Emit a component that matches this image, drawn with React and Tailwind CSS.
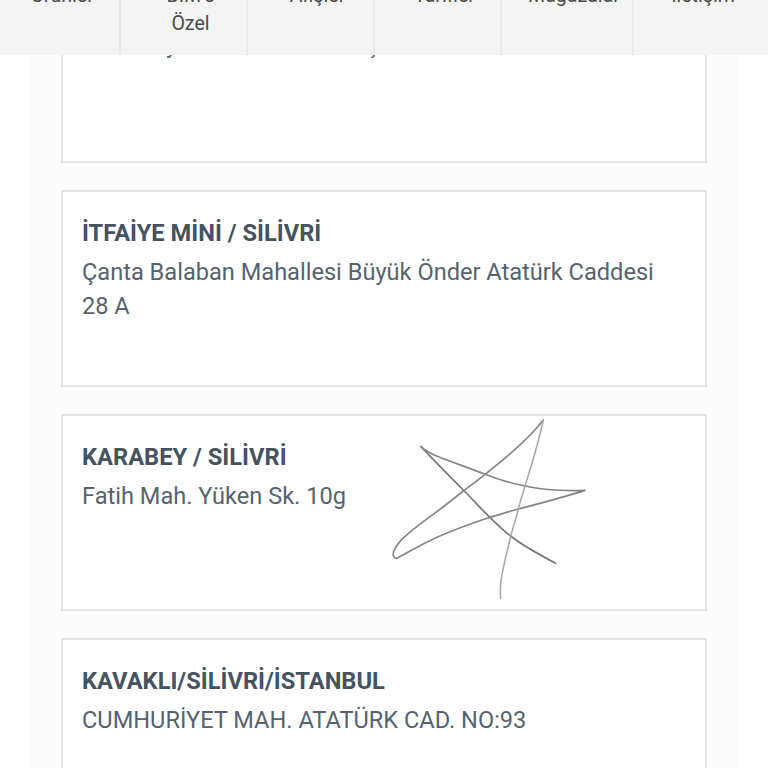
const navItems = [
  { label: 'Ürünler', width: 'w-[121px] pl-[6px]' },
  { label: "BİM'e Özel", width: 'w-[127px] pl-[14px]' },
  { label: 'Afişler', width: 'w-[127px] pl-[14px]' },
  { label: 'Tarifler', width: 'w-[127px] pl-[14px]' },
  { label: 'Mağazalar', width: 'w-[132px] pl-[14px]' },
  { label: 'İletişim', width: 'flex-1 pl-[4px]' },
]

const stores = [
  { title: 'FENERKÖY / SİLİVRİ', address: 'Fenerköy Mahallesi Kurtuluş', addressGap: 'mt-[3px]' },
  { title: 'İTFAİYE MİNİ / SİLİVRİ', address: 'Çanta Balaban Mahallesi Büyük Önder Atatürk Caddesi 28 A', addressGap: 'mt-[6px]' },
  { title: 'KARABEY / SİLİVRİ', address: 'Fatih Mah. Yüken Sk. 10g', addressGap: 'mt-[6px]', signed: true },
  { title: 'KAVAKLI/SİLİVRİ/İSTANBUL', address: 'CUMHURİYET MAH. ATATÜRK CAD. NO:93', addressGap: 'mt-[6px]' },
]

function Scribble() {
  return (
    <svg
      className="absolute left-[317px] top-[-6px] w-[220px] h-[200px]"
      viewBox="0 0 660 600"
      fill="none"
      strokeLinecap="round"
      strokeLinejoin="round"
    >
      <path
        d="M123 110C170 160 210 200 250 240C285 275 305 300 330 322C350 342 370 362 392 378C425 405 480 435 527 460"
        stroke="#777777"
        strokeWidth="5"
      />
      <path
        d="M123 110C135 122 150 130 170 138C220 158 270 175 315 193C355 209 395 220 435 228C490 240 560 243 615 241C550 262 480 280 415 297C385 305 360 313 330 322C270 342 205 365 150 392C115 408 80 430 52 444C40 447 37 435 42 422C52 395 85 368 150 320C185 295 220 267 250 243C272 226 295 210 315 193C360 158 440 95 490 30"
        stroke="#858585"
        strokeWidth="5"
      />
      <path
        d="M490 30C475 100 455 165 435 228C428 250 421 275 415 297C408 325 400 350 392 378C382 425 368 470 362 520C361 535 361 550 362 565"
        stroke="#a6a6a6"
        strokeWidth="4.5"
      />
    </svg>
  )
}

export default function App() {
  return (
    <div className="relative h-[768px] overflow-hidden bg-white font-['Roboto',sans-serif]">
      {/* Sticky nav, scrolled so that the first text line is cut off */}
      <div className="absolute top-0 left-0 right-0 z-10 flex h-[55px] overflow-hidden bg-[#f4f4f4]">
        {navItems.map((item, i) => (
          <div
            key={item.label}
            className={`${item.width} flex justify-center border-r-2 border-[#e9e9e9] last:border-r-0`}
          >
            <span className="mt-[-18px] w-[80px] shrink-0 text-center text-[19.6px] leading-[28px] text-[#4a4a4a]">
              {i === 1 ? <>BİM'e<br />Özel</> : <span className="whitespace-nowrap flex justify-center">{item.label}</span>}
            </span>
          </div>
        ))}
      </div>

      <div className="mx-[30px] mt-[-35px] flex flex-col gap-[27px] bg-[#fcfcfc] pl-[31px] pr-[31px] pt-[1px] h-[840px]">
        {stores.map((store) => (
          <div
            key={store.title}
            className="relative h-[197px] shrink-0 border-2 border-[#e3e3e3] bg-white pl-[19px] pr-[40px] pt-[25px]"
          >
            <h3 className="text-[23.7px] leading-[32px] font-bold text-[#44535f]">{store.title}</h3>
            <p className={`${store.addressGap} text-[23.6px] leading-[34px] text-[#56636e]`}>{store.address}</p>
            {store.signed && <Scribble />}
          </div>
        ))}
      </div>
    </div>
  )
}
